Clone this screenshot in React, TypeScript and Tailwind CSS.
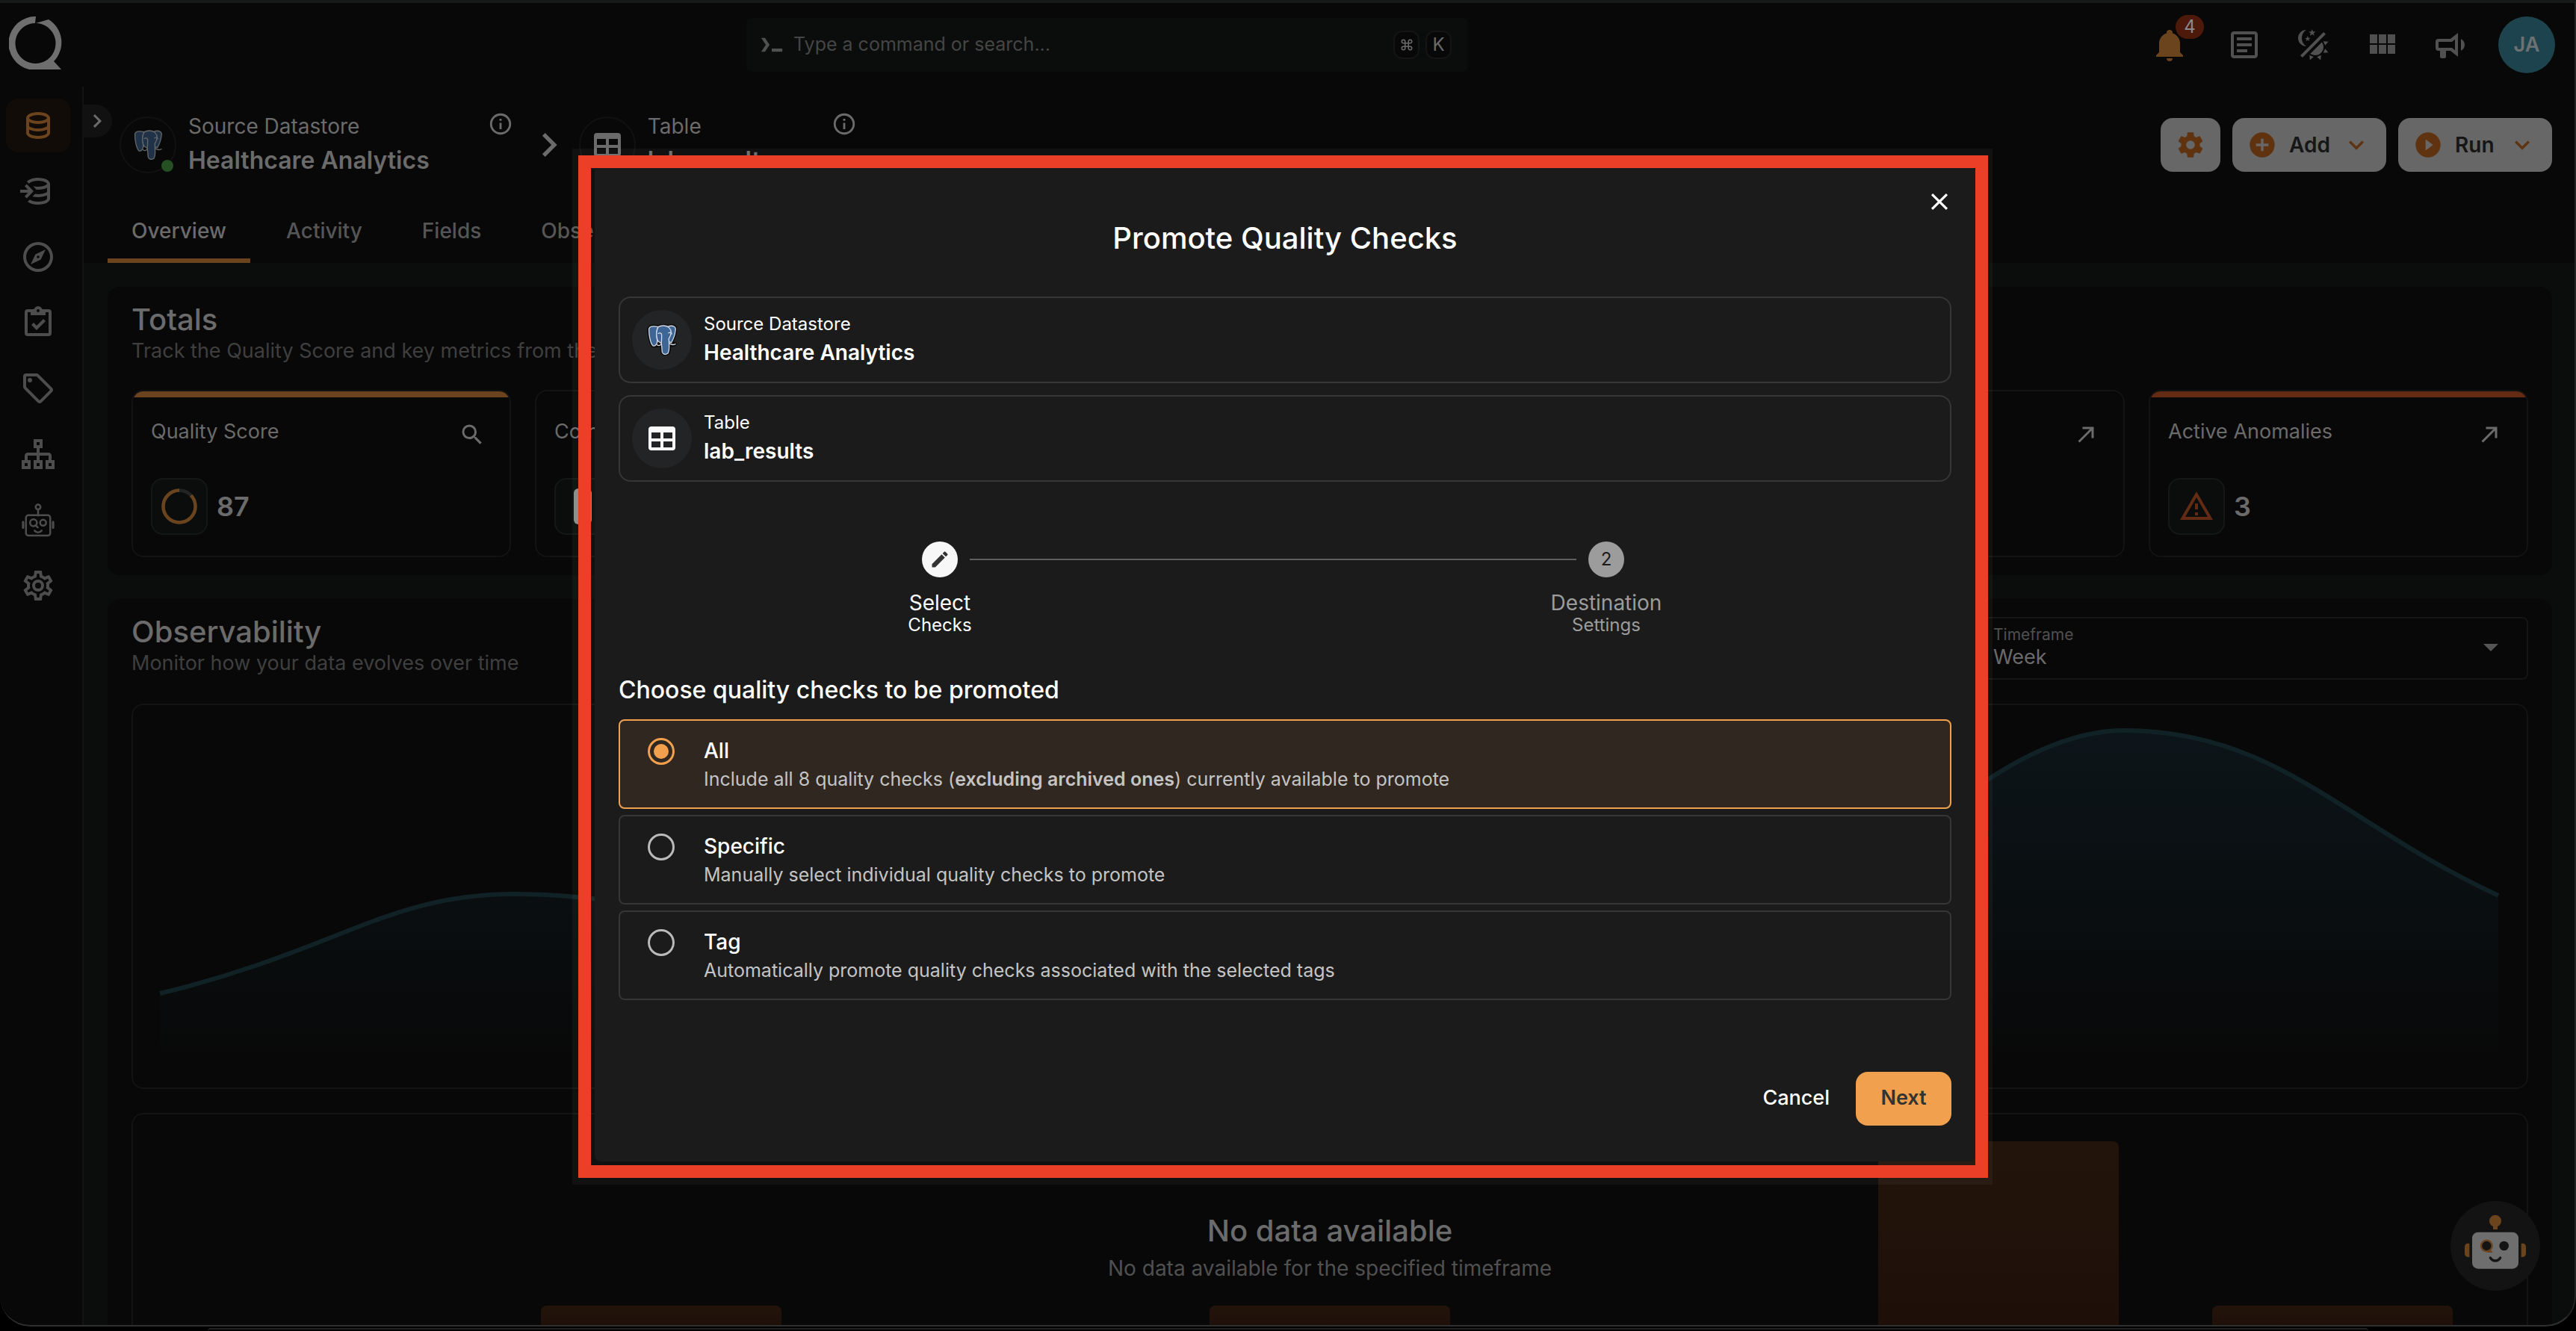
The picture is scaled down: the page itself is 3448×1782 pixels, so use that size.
import React from "react";
import { Command } from "lucide-react";

const paths = {
  bell: "M21,19V20H3V19L5,17V11C5,7.9 7.03,5.17 10,4.29C10,4.19 10,4.1 10,4A2,2 0 0,1 12,2A2,2 0 0,1 14,4C14,4.1 14,4.19 14,4.29C16.97,5.17 19,7.9 19,11V17L21,19M14,21A2,2 0 0,1 12,23A2,2 0 0,1 10,21",
  doc: "M5,3C3.89,3 3,3.89 3,5V19C3,20.11 3.89,21 5,21H19C20.11,21 21,20.11 21,19V5C21,3.89 20.11,3 19,3H5M5,5H19V19H5V5M7,7V9H17V7H7M7,11V13H17V11H7M7,15V17H14V15H7Z",
  theme: "M7.5,2C5.71,3.15 4.5,5.18 4.5,7.5C4.5,9.82 5.71,11.85 7.53,13C4.46,13 2,10.54 2,7.5A5.5,5.5 0 0,1 7.5,2M19.07,3.5L20.5,4.93L4.93,20.5L3.5,19.07L19.07,3.5M12.89,5.93L11.41,5L9.97,6L10.39,4.3L9,3.24L10.75,3.12L11.33,1.47L12,3.1L13.73,3.13L12.38,4.26L12.89,5.93M9.59,9.54L8.43,8.81L7.31,9.59L7.65,8.27L6.56,7.44L7.92,7.35L8.37,6.06L8.88,7.33L10.24,7.36L9.19,8.23L9.59,9.54M19,13.5A5.5,5.5 0 0,1 13.5,19C12.28,19 11.15,18.6 10.24,17.93L17.93,10.24C18.6,11.15 19,12.28 19,13.5M14.6,20.08L17.37,18.93L17.13,22.28L14.6,20.08M18.93,17.38L20.08,14.61L22.28,17.15L18.93,17.38M20.08,12.42L18.94,9.64L22.28,9.88L20.08,12.42M9.63,18.93L12.4,20.08L9.87,22.27L9.63,18.93Z",
  grid: "M16,5V11H21V5M10,11H15V5H10M16,18H21V12H16M10,18H15V12H10M4,18H9V12H4M4,11H9V5H4V11Z",
  megaphone: "M12,8H4A2,2 0 0,0 2,10V14A2,2 0 0,0 4,16H5V20A1,1 0 0,0 6,21H8A1,1 0 0,0 9,20V16H12L17,20V4L12,8M15,15.6L13,14H4V10H13L15,8.4V15.6M21.5,12C21.5,13.71 20.54,15.26 19,16V8C20.53,8.75 21.5,10.3 21.5,12Z",
  cog: "M12,15.5A3.5,3.5 0 0,1 8.5,12A3.5,3.5 0 0,1 12,8.5A3.5,3.5 0 0,1 15.5,12A3.5,3.5 0 0,1 12,15.5M19.43,12.97C19.47,12.65 19.5,12.33 19.5,12C19.5,11.67 19.47,11.34 19.43,11L21.54,9.37C21.73,9.22 21.78,8.95 21.66,8.73L19.66,5.27C19.54,5.05 19.27,4.96 19.05,5.05L16.56,6.05C16.04,5.66 15.5,5.32 14.87,5.07L14.5,2.42C14.46,2.18 14.25,2 14,2H10C9.75,2 9.54,2.18 9.5,2.42L9.13,5.07C8.5,5.32 7.96,5.66 7.44,6.05L4.95,5.05C4.73,4.96 4.46,5.05 4.34,5.27L2.34,8.73C2.21,8.95 2.27,9.22 2.46,9.37L4.57,11C4.53,11.34 4.5,11.67 4.5,12C4.5,12.33 4.53,12.65 4.57,12.97L2.46,14.63C2.27,14.78 2.21,15.05 2.34,15.27L4.34,18.73C4.46,18.95 4.73,19.03 4.95,18.95L7.44,17.94C7.96,18.34 8.5,18.68 9.13,18.93L9.5,21.58C9.54,21.82 9.75,22 10,22H14C14.25,22 14.46,21.82 14.5,21.58L14.87,18.93C15.5,18.67 16.04,18.34 16.56,17.94L19.05,18.95C19.27,19.03 19.54,18.95 19.66,18.73L21.66,15.27C21.78,15.05 21.73,14.78 21.54,14.63L19.43,12.97Z",
  cogOutline: "M12,8A4,4 0 0,1 16,12A4,4 0 0,1 12,16A4,4 0 0,1 8,12A4,4 0 0,1 12,8M12,10A2,2 0 0,0 10,12A2,2 0 0,0 12,14A2,2 0 0,0 14,12A2,2 0 0,0 12,10M10,22C9.75,22 9.54,21.82 9.5,21.58L9.13,18.93C8.5,18.68 7.96,18.34 7.44,17.94L4.95,18.95C4.73,19.03 4.46,18.95 4.34,18.73L2.34,15.27C2.21,15.05 2.27,14.78 2.46,14.63L4.57,12.97L4.5,12L4.57,11L2.46,9.37C2.27,9.22 2.21,8.95 2.34,8.73L4.34,5.27C4.46,5.05 4.73,4.96 4.95,5.05L7.44,6.05C7.96,5.66 8.5,5.32 9.13,5.07L9.5,2.42C9.54,2.18 9.75,2 10,2H14C14.25,2 14.46,2.18 14.5,2.42L14.87,5.07C15.5,5.32 16.04,5.66 16.56,6.05L19.05,5.05C19.27,4.96 19.54,5.05 19.66,5.27L21.66,8.73C21.79,8.95 21.73,9.22 21.54,9.37L19.43,11L19.5,12L19.43,13L21.54,14.63C21.73,14.78 21.79,15.05 21.66,15.27L19.66,18.73C19.54,18.95 19.27,19.04 19.05,18.95L16.56,17.95C16.04,18.34 15.5,18.68 14.87,18.93L14.5,21.58C14.46,21.82 14.25,22 14,22H10M11.25,4L10.88,6.61C9.68,6.86 8.62,7.5 7.85,8.39L5.44,7.35L4.69,8.65L6.8,10.2C6.4,11.37 6.4,12.64 6.8,13.8L4.68,15.36L5.43,16.66L7.86,15.62C8.63,16.5 9.68,17.14 10.87,17.38L11.24,20H12.76L13.13,17.39C14.32,17.14 15.37,16.5 16.14,15.62L18.57,16.66L19.32,15.36L17.2,13.81C17.6,12.64 17.6,11.37 17.2,10.2L19.31,8.65L18.56,7.35L16.15,8.39C15.38,7.5 14.32,6.86 13.12,6.62L12.75,4H11.25Z",
  compass: "M7,17L10.2,10.2L17,7L13.8,13.8L7,17M12,11.1A0.9,0.9 0 0,0 11.1,12A0.9,0.9 0 0,0 12,12.9A0.9,0.9 0 0,0 12.9,12A0.9,0.9 0 0,0 12,11.1M12,2A10,10 0 0,1 22,12A10,10 0 0,1 12,22A10,10 0 0,1 2,12A10,10 0 0,1 12,2M12,4A8,8 0 0,0 4,12A8,8 0 0,0 12,20A8,8 0 0,0 20,12A8,8 0 0,0 12,4Z",
  clipboard: "M19,3H14.82C14.4,1.84 13.3,1 12,1C10.7,1 9.6,1.84 9.18,3H5A2,2 0 0,0 3,5V19A2,2 0 0,0 5,21H19A2,2 0 0,0 21,19V5A2,2 0 0,0 19,3M12,3A1,1 0 0,1 13,4A1,1 0 0,1 12,5A1,1 0 0,1 11,4A1,1 0 0,1 12,3M7,7H17V5H19V19H5V5H7V7M7.5,13.5L9,12L11,14L15.5,9.5L17,11L11,17L7.5,13.5Z",
  tag: "M21.41,11.58L12.41,2.58C12.04,2.21 11.53,2 11,2H4A2,2 0 0,0 2,4V11C2,11.53 2.21,12.04 2.59,12.41L11.58,21.41C11.95,21.78 12.47,22 13,22C13.53,22 14.04,21.79 14.41,21.41L21.41,14.41C21.79,14.04 22,13.53 22,13C22,12.47 21.79,11.96 21.41,11.58M13,20L4,11V4H11L20,13M6.5,5A1.5,1.5 0 1,1 5,6.5A1.5,1.5 0 0,1 6.5,5Z",
  database: "M12 3C7.58 3 4 4.79 4 7V17C4 19.21 7.59 21 12 21S20 19.21 20 17V7C20 4.79 16.42 3 12 3M18 17C18 17.5 15.87 19 12 19S6 17.5 6 17V14.77C7.61 15.55 9.72 16 12 16S16.39 15.55 18 14.77V17M18 12.45C16.7 13.4 14.42 14 12 14C9.58 14 7.3 13.4 6 12.45V9.64C7.47 10.47 9.61 11 12 11C14.39 11 16.53 10.47 18 9.64V12.45M12 9C8.13 9 6 7.5 6 7S8.13 5 12 5C15.87 5 18 6.5 18 7S15.87 9 12 9Z",
  databaseImport: "M12,3C8.6,3 5.7,4.1 4.5,5.6L6.7,7.8C6.2,7.4 6,7.1 6,7C6,6.5 8.1,5 12,5S18,6.5 18,7S15.9,9 12,9C10.7,9 9.6,8.8 8.7,8.6L10.8,10.9C11.2,11 11.6,11 12,11C14.4,11 16.5,10.5 18,9.6V12.5C16.7,13.4 14.4,14 12,14C11.3,14 10.6,14 10,13.8L8.2,15.6C9.4,15.9 10.7,16 12,16C14.3,16 16.4,15.6 18,14.8V17C18,17.5 15.9,19 12,19C9.3,19 7.4,18.3 6.5,17.6L5,19C6.5,20.2 9.1,21 12,21C16.4,21 20,19.2 20,17V7C20,4.8 16.4,3 12,3M4.4,7.2L3,8.6L5.2,11H0V13H5.2L3,15.4L4.4,16.8L9,12L4.4,7.2Z",
  sitemap: "M9 2V8H11V11H5C3.89 11 3 11.89 3 13V16H1V22H7V16H5V13H11V16H9V22H15V16H13V13H19V16H17V22H23V16H21V13C21 11.89 20.11 11 19 11H13V8H15V2H9M11 4H13V6H11V4M3 18H5V20H3V18M11 18H13V20H11V18M19 18H21V20H19V18Z",
  plusCircle: "M17,13H13V17H11V13H7V11H11V7H13V11H17M12,2A10,10 0 0,0 2,12A10,10 0 0,0 12,22A10,10 0 0,0 22,12A10,10 0 0,0 12,2Z",
  playCircle: "M10,16.5V7.5L16,12M12,2A10,10 0 0,0 2,12A10,10 0 0,0 12,22A10,10 0 0,0 22,12A10,10 0 0,0 12,2Z",
  chevronDown: "M7.41,8.58L12,13.17L16.59,8.58L18,10L12,16L6,10L7.41,8.58Z",
  chevronRight: "M8.59,16.58L13.17,12L8.59,7.41L10,6L16,12L10,18L8.59,16.58Z",
  table: "M5,4H19A2,2 0 0,1 21,6V18A2,2 0 0,1 19,20H5A2,2 0 0,1 3,18V6A2,2 0 0,1 5,4M5,8V12H11V8H5M13,8V12H19V8H13M5,14V18H11V14H5M13,14V18H19V14H13Z",
  info: "M11,9H13V7H11M12,20C7.59,20 4,16.41 4,12C4,7.59 7.59,4 12,4C16.41,4 20,7.59 20,12C20,16.41 16.41,20 12,20M12,2A10,10 0 0,0 2,12A10,10 0 0,0 12,22A10,10 0 0,0 22,12A10,10 0 0,0 12,2M11,17H13V11H11V17Z",
  magnify: "M9.5,3A6.5,6.5 0 0,1 16,9.5C16,11.11 15.41,12.59 14.44,13.73L14.71,14H15.5L20.5,19L19,20.5L14,15.5V14.71L13.73,14.44C12.59,15.41 11.11,16 9.5,16A6.5,6.5 0 0,1 3,9.5A6.5,6.5 0 0,1 9.5,3M9.5,5C7,5 5,7 5,9.5C5,12 7,14 9.5,14C12,14 14,12 14,9.5C14,7 12,5 9.5,5Z",
  arrow: "M5,17.59L15.59,7H9V5H19V15H17V8.41L6.41,19L5,17.59Z",
  alert: "M12,2L1,21H23M12,6L19.53,19H4.47M11,10V14H13V10M11,16V18H13V16",
  pencil: "M20.71,7.04C21.1,6.65 21.1,6 20.71,5.63L18.37,3.29C18,2.9 17.35,2.9 16.96,3.29L15.12,5.12L18.87,8.87M3,17.25V21H6.75L17.81,9.93L14.06,6.18L3,17.25Z",
  close: "M19,6.41L17.59,5L12,10.59L6.41,5L5,6.41L10.59,12L5,17.59L6.41,19L12,13.41L17.59,19L19,17.59L13.41,12L19,6.41Z",
  menuDown: "M7,10L12,15L17,10H7Z",
  prompt: "M2,5.5H5.6L10,12L5.6,18.5H2L6.4,12ZM12,15.5H22V18.5H12Z",
};

function Icon({ name, className }: { name: keyof typeof paths; className: string }) {
  return (
    <svg viewBox="0 0 24 24" fill="currentColor" aria-hidden="true" className={className}>
      <path d={paths[name]} />
    </svg>
  );
}

function RobotOutline({ className }: { className: string }) {
  return (
    <svg viewBox="1 0 46 47" fill="none" stroke="currentColor" strokeWidth="2.6" strokeLinecap="round" aria-hidden="true" className={className}>
      <circle cx="24" cy="5" r="3.4" />
      <path d="M24 9v8" />
      <rect x="7" y="16.5" width="34" height="28.5" rx="3.5" />
      <path d="M3 26v8M45 26v8" strokeWidth="3.2" />
      <circle cx="17.5" cy="27" r="4.8" />
      <path d="M20.5 30.500l3 3" />
      <circle cx="31" cy="27" r="4.2" />
      <path d="M19 38c3 3.500 7 3.500 10 0" />
    </svg>
  );
}

function RobotSolid({ className }: { className: string }) {
  return (
    <svg viewBox="0 0 420 420" aria-hidden="true" className={className}>
      <circle cx="210" cy="110" r="24" fill="#6b431d" />
      <rect x="201" y="125" width="18" height="19" fill="#6b431d" />
      <path d="M106 200h-6c-8 0-13 6-13 14v27c0 8 5 14 13 14h6zM314 200h6c8 0 13 6 13 14v27c0 8-5 14-13 14h-6z" fill="#6b431d" />
      <rect x="117" y="155" width="186" height="147" rx="24" fill="#6e6e6e" />
      <circle cx="175" cy="210" r="22" fill="#141414" stroke="#6b431d" strokeWidth="7" />
      <path d="M176 237h24l-10-13z" fill="#6b431d" />
      <circle cx="245" cy="210" r="19" fill="#141414" />
      <path d="M190 258c10 16 30 16 40 0" fill="none" stroke="#141414" strokeWidth="10" strokeLinecap="round" />
    </svg>
  );
}

function Elephant({ className }: { className: string }) {
  return (
    <svg viewBox="76 68 122 128" aria-hidden="true" className={className} strokeLinejoin="round" strokeLinecap="round">
      <g fill="none" stroke="#0b0b0b" strokeWidth="13">
        <path d="M84 92C82 76 102 74 122 79C134 73 152 73 162 78C182 70 196 78 192 94C190 115 182 132 175 144L192 149C184 155 174 155 167 152C168 170 167 180 162 186C154 194 141 192 138 182L136 152L118 156L100 157C90 145 84 115 84 92Z" />
      </g>
      <g fill="#3d6595" stroke="#d5dbe2" strokeWidth="4">
        <path d="M84 92C82 76 102 74 122 79C114 92 114 115 118 135C119 150 108 160 100 156C90 145 84 115 84 92Z" />
        <path d="M160 78C182 70 196 78 192 94C190 115 182 132 175 144L164 138Z" />
        <path d="M122 79C134 72 156 72 166 82C180 96 174 114 165 128C167 150 168 176 162 186C154 194 141 192 138 182C136 168 137 154 134 146C128 138 119 142 118 130C113 112 115 92 122 79Z" />
        <path d="M122 106C128 102 135 104 136 112C136 124 136 136 134 146M164 104C170 100 176 102 177 108" fill="none" />
        <path d="M166 145C174 153 184 153 192 149M134 150C128 157 122 156 117 152" fill="none" />
      </g>
    </svg>
  );
}

function Logo() {
  return (
    <svg viewBox="0 0 72 72" aria-label="Home" className="size-[72px]">
      <path
        fill="#6e6e6e"
        d="M36 0A36 36 0 0 0 27 71H70L60 60A36 36 0 0 0 53 4L36 9A27 27 0 1 1 35 9Z"
      />
    </svg>
  );
}

const sidebar: { label: string; icon?: keyof typeof paths }[] = [
  { label: "Source datastores", icon: "database" },
  { label: "Enrichment datastores", icon: "databaseImport" },
  { label: "Explore", icon: "compass" },
  { label: "Library", icon: "clipboard" },
  { label: "Tags", icon: "tag" },
  { label: "Flows", icon: "sitemap" },
  { label: "Assistant" },
  { label: "Settings", icon: "cogOutline" },
];

function TopBar() {
  return (
    <header className="flex h-28 shrink-0 items-center justify-between bg-[#080808] pr-7 pl-3 text-[#505050]">
      <a href="#home" className="pb-1">
        <Logo />
      </a>
      <div className="flex h-[72px] w-[966px] items-center rounded-lg bg-[#0a0d0c] pr-[22px] pl-[17px]">
        <Icon name="prompt" className="size-[34px]" />
        <input
          type="text"
          aria-label="Command or search"
          placeholder="Type a command or search..."
          className="ml-3 min-w-0 flex-1 bg-transparent text-[25px] outline-none placeholder:text-[#454545]"
        />
        <kbd className="mr-2 flex h-[38px] w-[35px] items-center justify-center rounded-xl border-2 border-[#141414] bg-[#080808] text-[#6b6b6b]">
          <Command className="size-[18px]" aria-label="Command" />
        </kbd>
        <kbd className="flex h-[38px] w-[35px] items-center justify-center rounded-xl border-2 border-[#141414] bg-[#080808] font-[Inter] text-[24px] text-[#6b6b6b]">K</kbd>
      </div>
      <div className="flex items-center gap-11">
        <button type="button" aria-label="Notifications" className="relative mr-2 text-[#6b431d]">
          <Icon name="bell" className="size-12" />
          <span className="absolute -top-4 left-8 flex h-8 w-[38px] items-center justify-center rounded-full bg-[#4c190a] text-[24px] text-[#8a8a8a]">4</span>
        </button>
        <button type="button" aria-label="Documentation"><Icon name="doc" className="size-12" /></button>
        <button type="button" aria-label="Theme"><Icon name="theme" className="size-12" /></button>
        <button type="button" aria-label="Views"><Icon name="grid" className="size-12" /></button>
        <button type="button" aria-label="Announcements"><Icon name="megaphone" className="size-12" /></button>
        <button type="button" className="-ml-1 size-[76px] rounded-full bg-[#1c434e] text-[27px] font-semibold text-[#6c7173]">JA</button>
      </div>
    </header>
  );
}

function SideNav() {
  return (
    <nav className="relative flex w-28 shrink-0 flex-col gap-4 border-r-2 border-[#131313] bg-[#080808] pt-4 pl-2">
      {sidebar.map((item, i) => (
        <a
          key={item.label}
          href="#nav"
          aria-label={item.label}
          className={
            i === 0
              ? "flex h-[72px] w-[86px] items-center justify-center rounded-2xl bg-[#120c09] text-[#6b431d]"
              : "flex h-[72px] w-[86px] items-center justify-center rounded-2xl text-[#4d4d4d]"
          }
        >
          {item.icon ? <Icon name={item.icon} className="size-12" /> : <RobotOutline className="h-[45px] w-11" />}
        </a>
      ))}
      <button type="button" aria-label="Expand menu" className="absolute top-6 left-full flex h-11 w-10 items-center justify-center rounded-r-full bg-[#111] text-[#6b6b6b]">
        <Icon name="chevronRight" className="size-9" />
      </button>
    </nav>
  );
}

function Entity({ label, name, children }: { label: string; name: string; children: React.ReactNode }) {
  return (
    <div className="flex items-center gap-4">
      <div className="relative flex size-[76px] items-center justify-center rounded-full border-2 border-[#111] text-[#6b6b6b]">
        {children}
      </div>
      <div className="pb-1 leading-[46px] text-[#6b6b6b]">
        <div className="text-[28px]">{label}</div>
        <div className="text-[32px] font-semibold">{name}</div>
      </div>
      <button type="button" aria-label={label + " details"} className="mb-14 ml-[62px] text-[#6b6b6b]">
        <Icon name="info" className="size-[34px]" />
      </button>
    </div>
  );
}

function PageHeader() {
  return (
    <div className="shrink-0 bg-[#080808]">
      <div className="flex h-[156px] items-center justify-between pr-8 pl-12">
        <div className="flex items-center">
          <Entity label="Source Datastore" name="Healthcare Analytics">
            <Elephant className="h-[42px] w-10 opacity-45" />
            <span className="absolute right-0.5 bottom-0 size-4 rounded-full bg-[#255023]" />
          </Entity>
          <Icon name="chevronRight" className="mr-2 ml-4 size-16 text-[#6b6b6b]" />
          <Entity label="Table" name="lab_results">
            <Icon name="table" className="size-12" />
          </Entity>
        </div>
        <div className="flex gap-4 text-[28px] font-semibold text-[#5f3210]">
          <button type="button" aria-label="Table settings" className="flex h-[72px] w-20 items-center justify-center rounded-2xl bg-[#676767]">
            <Icon name="cog" className="size-10" />
          </button>
          {(["Add", "Run"] as const).map((label) => (
            <button key={label} type="button" className="flex h-[72px] w-[206px] items-center rounded-2xl bg-[#676767] px-5">
              <Icon name={label === "Add" ? "plusCircle" : "playCircle"} className="size-10" />
              <span className="ml-4 flex-1 text-left text-[#161616]">{label}</span>
              <Icon name="chevronDown" className="size-10" />
            </button>
          ))}
        </div>
      </div>
      <div className="flex gap-4 pl-8 text-[28px] font-medium">
        {["Overview", "Activity", "Fields", "Observability"].map((tab, i) => (
          <button
            key={tab}
            type="button"
            className={
              i === 0
                ? "flex h-20 items-center border-b-6 border-[#6b431d] px-8 text-[#6b6b6b]"
                : "flex h-20 items-center border-b-6 border-transparent px-8 text-[#565656]"
            }
          >
            {tab}
          </button>
        ))}
      </div>
    </div>
  );
}

const metrics = [
  { title: "Quality Score", value: "87", bar: "h-2 bg-[#6b431d]", kind: "ring" },
  { title: "Completeness", value: "", bar: "h-2", kind: "block" },
  { title: "Records", value: "", bar: "h-2", kind: "block" },
  { title: "Fields", value: "", bar: "h-2", kind: "block" },
  { title: "Checks", value: "8", bar: "h-2", kind: "block" },
  { title: "Active Anomalies", value: "3", bar: "h-2 bg-[#632b14]", kind: "alert" },
];

function Totals() {
  return (
    <section className="rounded-2xl bg-[#080808] px-8 pt-5 pb-6">
      <h2 className="text-[40px] leading-[48px] font-medium text-[#6b6b6b]">Totals</h2>
      <p className="text-[27px] leading-9 text-[#3f3f3f]">Track the Quality Score and key metrics from the table</p>
      <div className="mt-[34px] grid grid-cols-6 gap-8">
        {metrics.map((m) => (
          <article key={m.title} className="overflow-hidden rounded-2xl border-2 border-[#131313]">
            <div className={m.bar} />
            <div className="px-6 py-7">
              <div className="flex h-9 items-center justify-between text-[#6b6b6b]">
                <h3 className="text-[27px]">{m.title}</h3>
                <button type="button" aria-label={"Open " + m.title} className="mt-2 mr-2">
                  <Icon name={m.kind === "ring" ? "magnify" : "arrow"} className="size-9" />
                </button>
              </div>
              <div className="mt-11 flex items-center gap-3">
                <div className="flex size-[76px] items-center justify-center rounded-2xl border-2 border-[#151716] bg-[#0a0d0c]">
                  {m.kind === "ring" && (
                    <svg viewBox="0 0 48 48" className="size-12" fill="none" strokeWidth="4.500" aria-hidden="true">
                      <circle cx="24" cy="24" r="21.500" stroke="#242424" />
                      <circle cx="24" cy="24" r="21.500" stroke="#6b431d" pathLength="100" strokeDasharray="87 13" transform="rotate(-90 24 24) scale(1 -1) translate(0 -48)" />
                    </svg>
                  )}
                  {m.kind === "block" && <div className="h-12 w-6 rounded-md bg-[#8a8a8a]" />}
                  {m.kind === "alert" && <Icon name="alert" className="size-12 text-[#632b14]" />}
                </div>
                <span className="text-[36px] font-semibold text-[#6b6b6b]">{m.value}</span>
              </div>
            </div>
          </article>
        ))}
      </div>
    </section>
  );
}

const bars = [0, 28, 0, 28, 0, 248, 28];

function Observability() {
  return (
    <section className="flex min-h-0 flex-1 flex-col rounded-t-2xl bg-[#080808] px-8 pt-5">
      <div className="flex h-[88px] items-start justify-between">
        <div>
          <h2 className="text-[40px] leading-[48px] font-medium text-[#6b6b6b]">Observability</h2>
          <p className="text-[27px] leading-9 text-[#3f3f3f]">Monitor how your data evolves over time</p>
        </div>
        <div className="mt-1 flex h-[84px] w-[740px] items-center justify-between rounded-lg border-2 border-[#151515] pr-6 pb-1 pl-[22px]">
          <div className="flex flex-1 flex-col">
            <label htmlFor="timeframe" className="text-[21px] leading-7 text-[#505050]">Timeframe</label>
            <select id="timeframe" className="appearance-none bg-transparent text-[27px] leading-8 text-[#6b6b6b] outline-none">
              <option>Week</option>
            </select>
          </div>
          <Icon name="menuDown" className="size-12 text-[#555]" />
        </div>
      </div>
      <div className="mt-8 h-[516px] shrink-0 rounded-2xl border-2 border-[#131313]">
        <svg viewBox="0 0 3204 512" preserveAspectRatio="none" className="size-full" aria-label="Weekly volume">
          <defs>
            <linearGradient id="area" x1="0" y1="0" x2="0" y2="1">
              <stop offset="0" stopColor="#0c1519" />
              <stop offset="1" stopColor="#080808" />
            </linearGradient>
          </defs>
          <path d="M36 386C270 330 340 253 510 253S900 310 1080 340S1400 330 1600 300S1950 340 2123 320S2470 34 2665 34C2870 34 2960 160 3166 255V480H36Z" fill="url(#area)" />
          <path d="M36 386C270 330 340 253 510 253S900 310 1080 340S1400 330 1600 300S1950 340 2123 320S2470 34 2665 34C2870 34 2960 160 3166 255" fill="none" stroke="#112227" strokeWidth="6" />
        </svg>
      </div>
      <div className="relative mt-8 min-h-0 flex-1 overflow-hidden rounded-t-2xl border-2 border-b-0 border-[#131313]">
        <div className="flex h-full items-end px-9">
          {bars.map((height, i) => (
            <div key={i} className="flex flex-1 justify-center">
              <div className="w-[72%] rounded-t-lg bg-linear-to-b from-[#23140b] to-[#1e1009]" style={{ height }} />
            </div>
          ))}
        </div>
        <div className="absolute inset-x-0 top-[130px] text-center">
          <p className="text-[40px] leading-[52px] font-medium text-[#6b6b6b]">No data available</p>
          <p className="text-[28px] leading-[48px] text-[#505050]">No data available for the specified timeframe</p>
        </div>
      </div>
    </section>
  );
}

function Card({ label, name, children }: { label: string; name: string; children: React.ReactNode }) {
  return (
    <div className="flex h-[116px] items-center gap-4 rounded-2xl border-2 border-[#363636] px-4">
      <div className="flex size-20 items-center justify-center rounded-full bg-[#232426]">{children}</div>
      <div className="pb-1 leading-[38px] text-white">
        <div className="text-[24px]">{label}</div>
        <div className="text-[28px] font-semibold">{name}</div>
      </div>
    </div>
  );
}

const options = [
  {
    id: "all",
    title: "All",
    text: (
      <>
        Include all 8 quality checks (<strong className="font-semibold">excluding archived ones</strong>) currently available to promote
      </>
    ),
  },
  { id: "specific", title: "Specific", text: "Manually select individual quality checks to promote" },
  { id: "tag", title: "Tag", text: "Automatically promote quality checks associated with the selected tags" },
];

function Dialog() {
  return (
    <div className="relative w-full max-w-[1848px]">
      <div className="absolute -top-[23px] -right-[23px] -bottom-[31px] -left-[30px] bg-white/4" />
      <div role="dialog" aria-labelledby="promote-title" className="relative rounded-lg bg-[#1b1b1b] pb-12 text-white">
        <div className="flex justify-end px-6 pt-6">
          <button type="button" aria-label="Close" className="flex size-12 items-center justify-center">
            <Icon name="close" className="size-[38px]" />
          </button>
        </div>
        <h1 id="promote-title" className="text-center text-[40px] leading-[50px] font-medium">Promote Quality Checks</h1>
        <div className="mt-[53px] flex flex-col gap-4 px-8">
          <Card label="Source Datastore" name="Healthcare Analytics">
            <Elephant className="h-[42px] w-10" />
          </Card>
          <Card label="Table" name="lab_results">
            <Icon name="table" className="size-12 text-[#fafafa]" />
          </Card>
        </div>
        <ol className="mt-20 mr-12 ml-4 grid grid-cols-2 text-center">
          <li>
            <div className="flex items-center">
              <span className="flex-1" />
              <span className="mx-4 flex size-12 items-center justify-center rounded-full bg-[#f7f7f7] text-[#333]">
                <Icon name="pencil" className="size-7" />
              </span>
              <span className="h-0.5 flex-1 bg-[#5f5f5f]" />
            </div>
            <div className="mt-4 text-[28px] leading-9">Select</div>
            <div className="text-[24px] leading-6">Checks</div>
          </li>
          <li className="text-[#9c9c9c]">
            <div className="flex items-center">
              <span className="h-0.5 flex-1 bg-[#5f5f5f]" />
              <span className="mx-4 flex size-12 items-center justify-center rounded-full bg-[#9c9c9c] text-[24px] text-[#1b1b1b]">2</span>
              <span className="flex-1" />
            </div>
            <div className="mt-4 text-[28px] leading-9">Destination</div>
            <div className="text-[24px] leading-6">Settings</div>
          </li>
        </ol>
        <fieldset className="px-8">
          <legend className="pt-[55px] text-[32px] leading-10 font-medium">Choose quality checks to be promoted</legend>
          <div className="mt-[19px] flex flex-col gap-2">
            {options.map((o, i) => (
              <label
                key={o.id}
                className={
                  i === 0
                    ? "flex h-[120px] gap-[39px] rounded-lg border-2 border-[#f1a04d] bg-[#302720] pt-[21px] pl-[37px]"
                    : "flex h-[120px] gap-[39px] rounded-lg border-2 border-[#363636] pt-[21px] pl-[37px]"
                }
              >
                <input
                  type="radio"
                  name="scope"
                  defaultChecked={i === 0}
                  className="mt-0.5 size-9 appearance-none rounded-full border-3 border-[#bababa] bg-clip-content p-[5px] checked:border-[#f1a04d] checked:bg-[#f1a04d]"
                />
                <span className="leading-[38px]">
                  <span className="block text-[28px] font-medium">{o.title}</span>
                  <span className="block text-[25px] text-[#c4c4c4]">{o.text}</span>
                </span>
              </label>
            ))}
          </div>
        </fieldset>
        <div className="mt-24 flex justify-end gap-[35px] px-8 text-[27px]">
          <button type="button" className="font-medium">Cancel</button>
          <button type="button" className="h-[72px] w-32 rounded-2xl bg-[#f1a04d] font-semibold text-[#333]">Next</button>
        </div>
      </div>
      <div className="pointer-events-none absolute -top-[14px] -right-[17px] -bottom-[22px] -left-[22px] border-17 border-[#eb4027]" />
    </div>
  );
}

export default function App() {
  return (
    <div className="flex h-screen flex-col overflow-hidden bg-black font-[Inter,sans-serif]">
      <div className="relative flex min-h-0 flex-1 flex-col overflow-hidden rounded-b-[40px] bg-[#080808] pt-1">
        <TopBar />
        <div className="flex min-h-0 flex-1">
          <SideNav />
          <main className="flex min-w-0 flex-1 flex-col bg-[#0b0d0c]">
            <PageHeader />
            <div className="flex min-h-0 flex-1 flex-col gap-8 px-8 pt-8">
              <Totals />
              <Observability />
            </div>
          </main>
        </div>
        <button type="button" aria-label="Open assistant" className="absolute right-12 bottom-12 size-[120px] rounded-full bg-[#131313]">
          <RobotSolid className="-m-2.5 size-[140px] max-w-none" />
        </button>
        <div className="pointer-events-none absolute inset-0 rounded-b-[40px] border-t-4 border-r-2 border-b-2 border-t-[#171a19] border-r-[#232323] border-b-[#303030]" />
        <div className="absolute inset-0 flex items-center justify-center pr-2">
          <Dialog />
        </div>
      </div>
      <div className="mx-[278px] mt-0.5 h-1 shrink-0 rounded-t-lg border-t-2 border-[#222] bg-black" />
    </div>
  );
}
